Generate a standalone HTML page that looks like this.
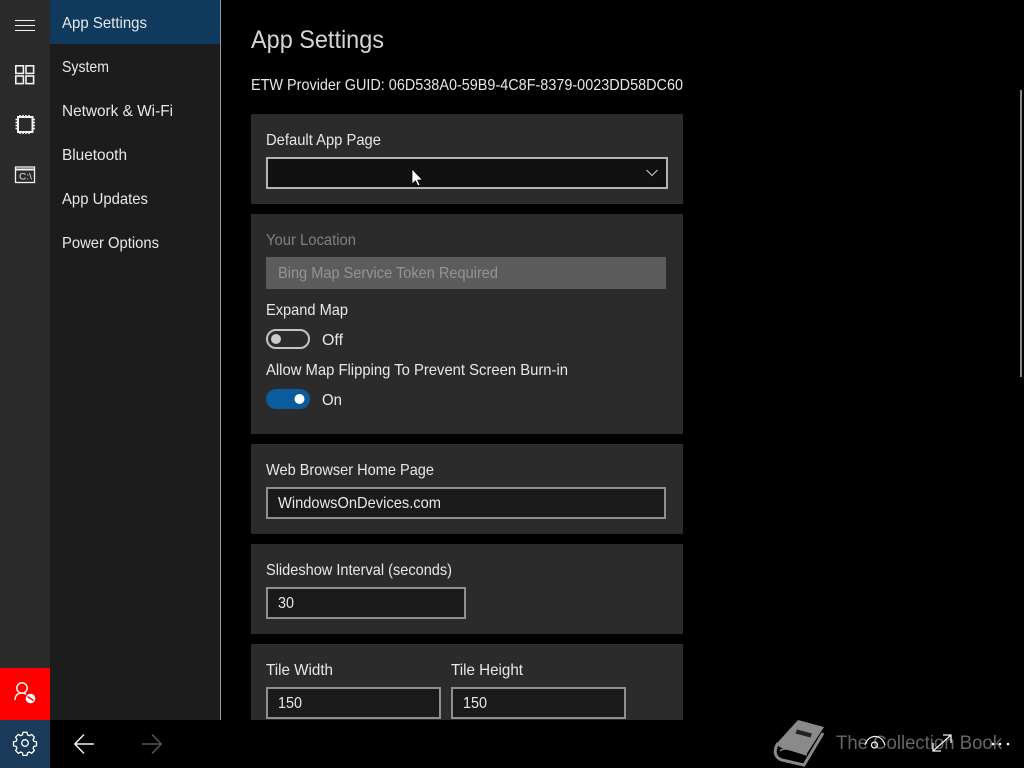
<!DOCTYPE html>
<html lang="en"><head><meta charset="utf-8"><title>App Settings</title>
<style>
html,body{margin:0;padding:0;background:#000;width:1024px;height:768px;overflow:hidden}
svg{display:block;position:absolute;left:0;top:0}
text{font-family:"Liberation Sans",sans-serif;font-size:16px;fill:#e8e8e8}
</style></head><body>
<svg width="1024" height="768" viewBox="0 0 1024 768" xmlns="http://www.w3.org/2000/svg">
<rect width="1024" height="768" fill="#000"/>
<!-- rail -->
<rect x="0" y="0" width="50" height="668" fill="#2b2b2b"/>
<rect x="0" y="668" width="50" height="52" fill="#ff0000"/>
<rect x="0" y="720" width="50" height="48" fill="#1b3a5a"/>
<!-- nav -->
<rect x="50" y="0" width="170" height="720" fill="#1c1c1c"/>
<rect x="50" y="0" width="170" height="44" fill="#0f3a5e"/>
<rect x="220" y="0" width="1" height="720" fill="#999"/>
<g>
<text x="62" y="28" textLength="85" lengthAdjust="spacingAndGlyphs">App Settings</text>
<text x="62" y="72" textLength="47" lengthAdjust="spacingAndGlyphs">System</text>
<text x="62" y="116" textLength="111" lengthAdjust="spacingAndGlyphs">Network &amp; Wi-Fi</text>
<text x="62" y="160" textLength="65" lengthAdjust="spacingAndGlyphs">Bluetooth</text>
<text x="62" y="204" textLength="86" lengthAdjust="spacingAndGlyphs">App Updates</text>
<text x="62" y="248" textLength="97" lengthAdjust="spacingAndGlyphs">Power Options</text>
</g>
<!-- rail icons -->
<g fill="none" stroke="#f2f2f2" stroke-width="1">
<path d="M15 20.500H35M15 25.500H35M15 30.500H35"/>
<g stroke-width="1.600">
<rect x="15.800" y="65.800" width="7.600" height="7.600"/><rect x="26" y="65.800" width="7.600" height="7.600"/>
<rect x="15.800" y="76" width="7.600" height="7.600"/><rect x="26" y="76" width="7.600" height="7.600"/>
</g>
<rect x="18" y="117" width="14.500" height="15" stroke-width="2"/>
<path d="M15.500 119.500h2M15.500 122.500h2M15.500 125.500h2M15.500 128.500h2M33 119.500h2M33 122.500h2M33 125.500h2M33 128.500h2M20 115v2M23 115v2M26 115v2M29 115v2M20 132v2M23 132v2M26 132v2M29 132v2" stroke-width="1.600"/>
<rect x="15.500" y="167" width="19" height="15.500" stroke-width="1.300"/>
<path d="M15 169.500H35" stroke-width="2"/>
</g>
<text x="19" y="179.500" textLength="13" lengthAdjust="spacingAndGlyphs" style="font-size:9px">C:\</text>
<!-- person -->
<g fill="none" stroke="#fff" stroke-width="1.400">
<circle cx="22" cy="688" r="5.200"/>
<path d="M15 700c0-4.500 3-7 7-7 1.500 0 3 .4 4 1.200"/>
</g>
<circle cx="30.500" cy="698.500" r="4.800" fill="#fff"/>
<path d="M27.500 696.500l6 4" stroke="#f00" stroke-width="1.500"/>
<!-- gear -->
<g fill="none" stroke="#fff" stroke-width="1.300">
<circle cx="25" cy="743" r="3.300"/>
<path d="M23 733.500h4l.6 2.600 1.700.8 2.400-1.300 2.700 2.800-1.300 2.300.7 1.700 2.700.7v3.900l-2.700.7-.7 1.700 1.300 2.300-2.700 2.800-2.400-1.300-1.700.8-.6 2.600h-4l-.6-2.600-1.700-.8-2.400 1.300-2.700-2.800 1.300-2.300-.7-1.700-2.700-.7v-3.900l2.700-.7.7-1.700-1.300-2.300 2.700-2.800 2.400 1.300 1.700-.8z" transform="translate(0 -1.200)"/>
</g>
<!-- arrows -->
<path d="M94 744H75M84 734.500L74.800 744L84 753.500" fill="none" stroke="#f0f0f0" stroke-width="1.500"/>
<path d="M142 744H161M152 734.500L161.200 744L152 753.500" fill="none" stroke="#555" stroke-width="1.500"/>
<!-- content -->
<text x="251" y="48" textLength="133" lengthAdjust="spacingAndGlyphs" style="font-size:25px;fill:#d4d4d4">App Settings</text>
<text x="251" y="90" textLength="432" lengthAdjust="spacingAndGlyphs">ETW Provider GUID: 06D538A0-59B9-4C8F-8379-0023DD58DC60</text>
<g fill="#2b2b2b">
<rect x="251" y="114" width="432" height="90"/>
<rect x="251" y="214" width="432" height="220"/>
<rect x="251" y="444" width="432" height="90"/>
<rect x="251" y="544" width="432" height="90"/>
<rect x="251" y="644" width="432" height="76"/>
</g>
<text x="266" y="145" textLength="115" lengthAdjust="spacingAndGlyphs">Default App Page</text>
<rect x="267" y="158" width="400" height="30" fill="#111" stroke="#b4b4b4" stroke-width="2"/>
<path d="M646.500 170L652 175.500L657.500 170" fill="none" stroke="#ccc" stroke-width="1.100"/>
<text x="266" y="245" textLength="90" lengthAdjust="spacingAndGlyphs" style="fill:#808080">Your Location</text>
<rect x="266" y="257" width="400" height="32" fill="#5c5c5c"/>
<text x="278" y="278" textLength="220" lengthAdjust="spacingAndGlyphs" style="fill:#949494">Bing Map Service Token Required</text>
<text x="266" y="315" textLength="82" lengthAdjust="spacingAndGlyphs">Expand Map</text>
<rect x="267" y="330" width="42" height="18" rx="9" fill="none" stroke="#c4c4c4" stroke-width="2"/>
<circle cx="276" cy="339" r="5" fill="#ccc"/>
<text x="322" y="345" textLength="21" lengthAdjust="spacingAndGlyphs">Off</text>
<text x="266" y="375" textLength="302" lengthAdjust="spacingAndGlyphs">Allow Map Flipping To Prevent Screen Burn-in</text>
<rect x="266" y="389" width="44" height="20" rx="10" fill="#0a5c9e"/>
<circle cx="299.500" cy="399" r="5" fill="#fff"/>
<text x="322" y="405" textLength="20" lengthAdjust="spacingAndGlyphs">On</text>
<text x="266" y="475" textLength="168" lengthAdjust="spacingAndGlyphs">Web Browser Home Page</text>
<rect x="267" y="488" width="398" height="30" fill="#1a1a1a" stroke="#8f8f8f" stroke-width="2"/>
<text x="278" y="508" textLength="163" lengthAdjust="spacingAndGlyphs">WindowsOnDevices.com</text>
<text x="266" y="575" textLength="186" lengthAdjust="spacingAndGlyphs">Slideshow Interval (seconds)</text>
<rect x="267" y="588" width="198" height="30" fill="#1a1a1a" stroke="#8f8f8f" stroke-width="2"/>
<text x="278" y="608" textLength="16" lengthAdjust="spacingAndGlyphs">30</text>
<text x="266" y="675" textLength="67" lengthAdjust="spacingAndGlyphs">Tile Width</text>
<text x="451" y="675" textLength="72" lengthAdjust="spacingAndGlyphs">Tile Height</text>
<rect x="267" y="688" width="173" height="30" fill="#1a1a1a" stroke="#8f8f8f" stroke-width="2"/>
<rect x="452" y="688" width="173" height="30" fill="#1a1a1a" stroke="#8f8f8f" stroke-width="2"/>
<text x="278" y="708" textLength="24" lengthAdjust="spacingAndGlyphs">150</text>
<text x="463" y="708" textLength="24" lengthAdjust="spacingAndGlyphs">150</text>
<!-- cursor -->
<path d="M412 169V184L415.500 180.800L418 186L420 185L417.700 180H422.500Z" fill="#fff" stroke="#000" stroke-width=".7"/>
<!-- scrollbar -->
<rect x="1020" y="90" width="2" height="287" fill="#8a8a8a"/>
<!-- watermark: cover, back board, spine strap, title plate -->
<path d="M798 720L824 727L806 755L782 748C778 747 777 744 778 742Z" fill="#8a8a8a"/>
<path d="M778 743C773 751 775 758 782 760L804 765L823 733" fill="none" stroke="#8a8a8a" stroke-width="3"/>
<path d="M780 751C783 748 787 749 791 750L807 755" fill="none" stroke="#8a8a8a" stroke-width="1.500"/>
<path d="M797 729.500L812 733.500L810.500 737.500L795.500 733.500Z" fill="#222"/>
<text x="836" y="749" textLength="166" lengthAdjust="spacingAndGlyphs" style="font-size:19px;fill:#666">The Collection Book</text>
<!-- system icons -->
<g fill="none" stroke="#f0f0f0" stroke-width="1.300">
<path d="M865 745C867 739 871 736.500 875 736.500C879 736.500 883 739 885 745"/>
<circle cx="874.500" cy="745" r="3"/>
<path d="M933 751L951 735M943 735H951V743M933 743V751H941"/>
</g>
<g fill="#fff"><circle cx="993" cy="744" r="1.300"/><circle cx="1000" cy="744" r="1.300"/><circle cx="1008" cy="744" r="1.300"/></g>
</svg>
</body></html>
